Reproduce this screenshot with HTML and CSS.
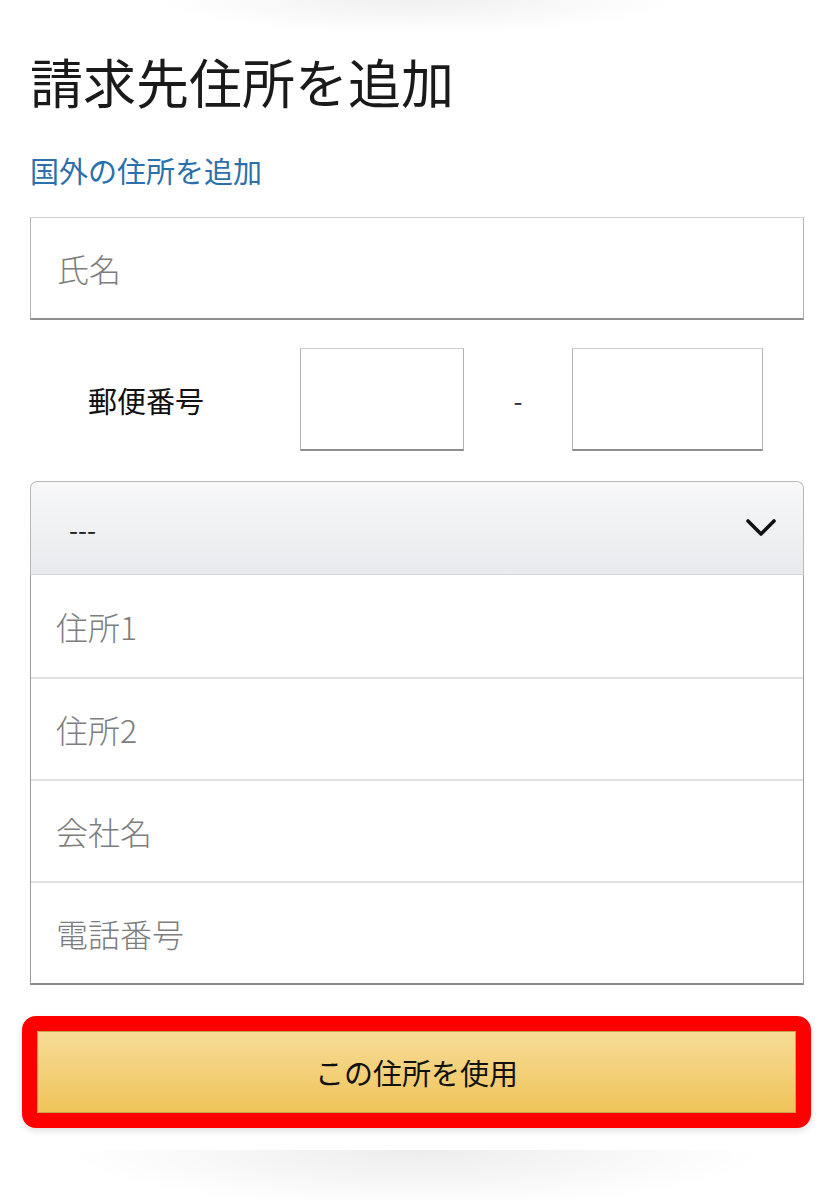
FILE: index.html
```html
<!DOCTYPE html>
<html lang="ja">

<head>
    <meta charset="UTF-8">
    <meta name="viewport" content="width=device-width, initial-scale=1.0">
    <title>請求先住所を追加</title>
    <link rel="stylesheet" href="styles.css">
</head>

<body>
<div class="page">
    <h1 class="title">請求先住所を追加</h1>
    <a class="link" href="#">国外の住所を追加</a>

    <input class="field field-name" type="text" placeholder="氏名">

    <div class="postal-row">
        <label class="postal-label" for="zip1">郵便番号</label>
        <input class="postal-box postal-first" id="zip1" type="text">
        <span class="postal-dash">-</span>
        <input class="postal-box postal-second" id="zip2" type="text">
    </div>

    <div class="select-box">
        <span class="select-value">---</span>
        <svg class="chevron" width="30" height="20" viewBox="0 0 30 20">
            <polyline points="2,3 15,16 28,3" fill="none" stroke="#111" stroke-width="3.6" stroke-linecap="round" stroke-linejoin="round"/>
        </svg>
    </div>

    <div class="address-group">
        <input class="group-row" type="text" placeholder="住所1">
        <input class="group-row" type="text" placeholder="住所2">
        <input class="group-row" type="text" placeholder="会社名">
        <input class="group-row" type="tel" placeholder="電話番号">
    </div>

    <div class="highlight">
        <button class="btn-submit">この住所を使用</button>
    </div>

    <div class="bottom-shadow"></div>
</div>
</body>

</html>
```

FILE: styles.css
```css
body {
    margin: 0;
    font-family: "Noto Sans CJK JP", "Noto Sans", sans-serif;
    background: radial-gradient(ellipse 260px 34px at 50% 0, #f0f0f0, #fff 100%) no-repeat #fff;
    color: #111;
}

.page {
    padding: 45px 29px 0 30px;
}

.title {
    margin: 0;
    font-size: 53px;
    line-height: 72px;
    font-weight: 400;
    color: #1a1a1a;
}

.link {
    display: block;
    margin-top: 33px;
    font-size: 29px;
    line-height: 40px;
    color: #2b70ac;
    text-decoration: none;
}

input {
    font-family: inherit;
    outline: none;
    background: #fff;
    box-sizing: border-box;
}

input::placeholder {
    color: #7d7d7d;
    font-weight: 300;
}

.field {
    display: block;
    width: 100%;
    height: 103px;
    margin-top: 27px;
    padding: 0 26px;
    font-size: 32px;
    border: 1px solid #b3b3b3;
    border-top-color: #d3d3d3;
    border-bottom: 2px solid #8f8f8f;
}

.postal-row {
    display: flex;
    align-items: center;
    height: 103px;
    margin-top: 28px;
}

.postal-label {
    width: 212px;
    padding-left: 58px;
    font-size: 29px;
    color: #111;
}

.postal-box {
    height: 103px;
    border: 1px solid #b3b3b3;
    border-top-color: #d0d0d0;
    border-bottom: 2px solid #8f8f8f;
}

.postal-first {
    width: 164px;
}

.postal-dash {
    width: 108px;
    text-align: center;
    font-size: 26px;
    color: #333;
}

.postal-second {
    width: 191px;
}

.select-box {
    display: flex;
    align-items: center;
    justify-content: space-between;
    height: 94px;
    margin-top: 30px;
    padding: 0 27px 0 38px;
    box-sizing: border-box;
    border: 1px solid #b8b8b8;
    border-bottom-color: #d4d6d9;
    border-radius: 7px 7px 0 0;
    background: linear-gradient(#f8f8f9, #e8eaed);
}

.select-value {
    font-size: 26px;
    color: #222;
}

.address-group {
    border: 1px solid #9c9c9c;
    border-top: none;
    border-bottom: 2px solid #8a8a8a;
}

.group-row {
    display: block;
    width: 100%;
    height: 102px;
    padding: 0 25px;
    font-size: 32px;
    border: none;
    border-top: 2px solid #e0e0e0;
}

.group-row:first-child {
    border-top: none;
}

.highlight {
    margin: 31px -7px 0 -8px;
    border: 15px solid #ff0000;
    border-radius: 14px;
    box-shadow: 0 3px 6px rgba(0, 0, 0, 0.12);
}

.btn-submit {
    display: block;
    width: 100%;
    height: 82px;
    font-family: inherit;
    font-size: 29px;
    color: #111;
    border: 1px solid #c9a54a;
    background: linear-gradient(#f7dc98, #efc459);
    cursor: pointer;
}

.bottom-shadow {
    height: 60px;
    margin: 22px 40px 0;
    background: radial-gradient(ellipse 50% 100% at 50% 0, rgba(0, 0, 0, 0.07), rgba(0, 0, 0, 0) 100%);
}
```
